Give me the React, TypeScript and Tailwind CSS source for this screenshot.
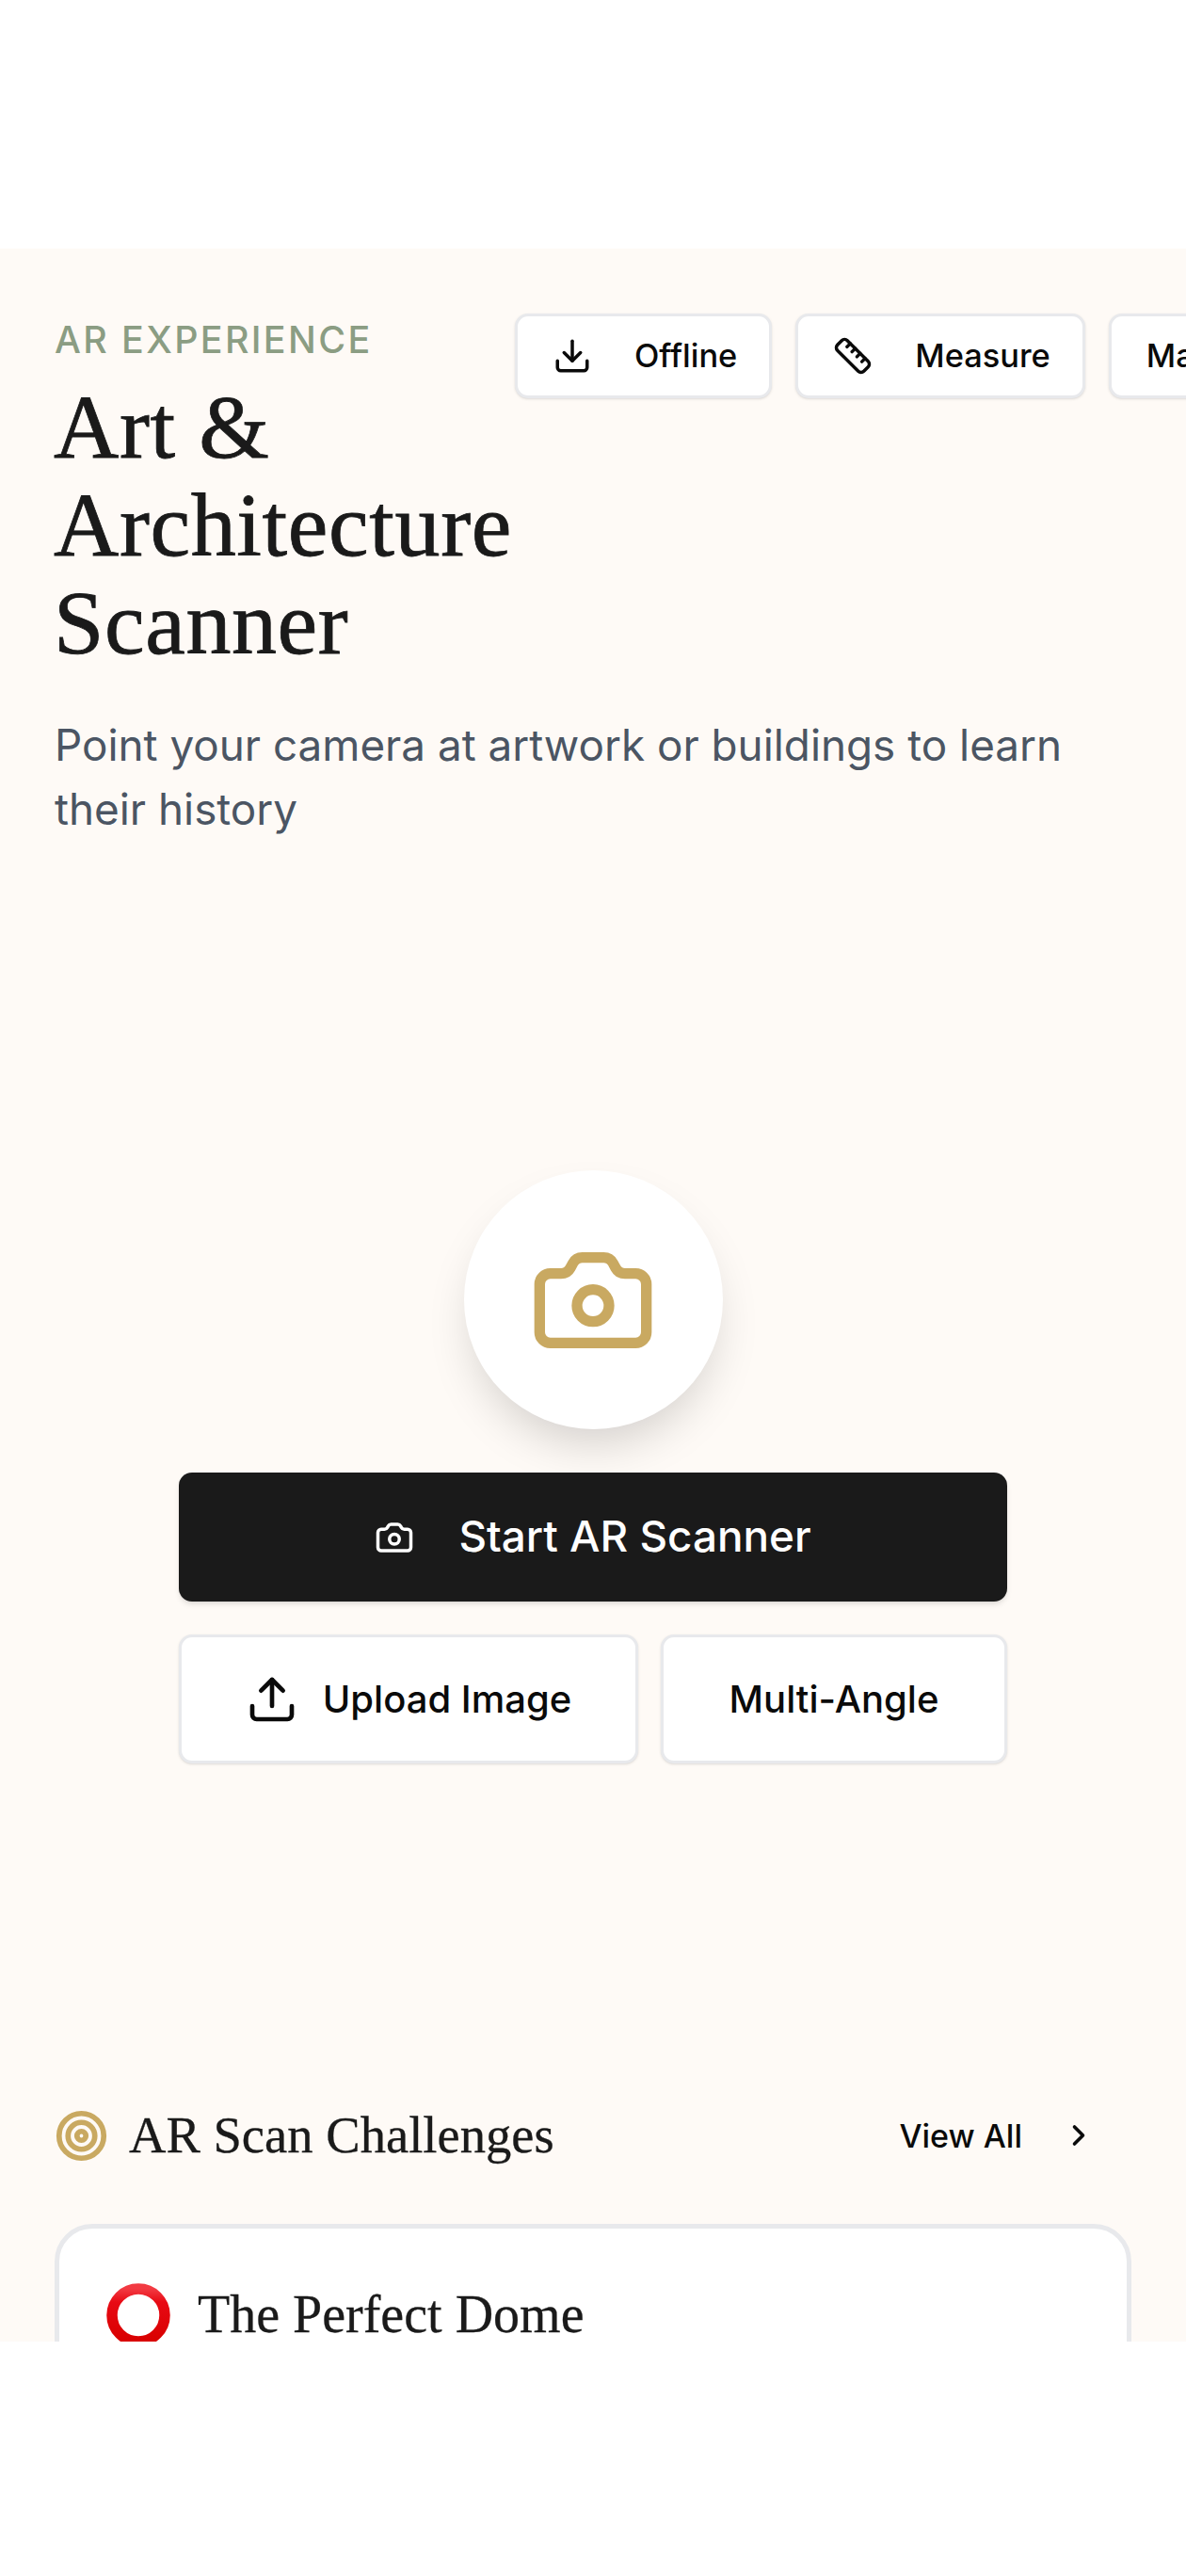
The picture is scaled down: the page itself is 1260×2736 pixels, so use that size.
import { Camera, ChevronRight, Download, Ruler, Target, Upload } from "lucide-react";

const sans = "font-['Inter','Liberation_Sans',sans-serif]";
const serif = "font-['Liberation_Serif','Times_New_Roman',serif]";

function Chip({ icon, label }: { icon: React.ReactNode; label: string }) {
  return (
    <div className="flex h-[90px] shrink-0 items-center gap-[45px] rounded-[14px] border-[3px] border-[#e8e9ec] bg-white pl-[37px] pr-[34px] shadow-sm">
      {icon}
      <span className="text-[34.4px] font-medium text-[#0a0a0a]">{label}</span>
    </div>
  );
}

export default function App() {
  return (
    <div className={`h-[2736px] w-[1260px] overflow-hidden bg-white ${sans}`}>
      <div className="h-[264px]" />
      <main className="flex h-[2223px] flex-col overflow-hidden bg-[#fefaf6] pt-[69px]">
        <div className="flex items-start">
          <div className="w-[547px] shrink-0 pl-[58px]">
            <div className="pt-[3px] text-[39.4px] font-medium leading-[50px] tracking-[0.06em] text-[#8b9d83]">AR EXPERIENCE</div>
          </div>
          <div className="flex gap-[25px]">
            <Chip label="Offline" icon={<Download size={42} strokeWidth={2} color="#0a0a0a" />} />
            <Chip label="Measure" icon={<Ruler size={42} strokeWidth={2} color="#0a0a0a" />} />
            <Chip label="Map" icon={null} />
          </div>
        </div>
        <h1 className={`-mt-[21px] w-[500px] pl-[57px] text-[96px] font-normal leading-[104px] tracking-[0.6px] text-[#1a1a1a] [-webkit-text-stroke:0.8px_#1a1a1a] ${serif}`}>
          Art &amp; Architecture Scanner
        </h1>
        <p className="mt-[44px] pl-[58px] pr-[100px] text-[45.8px] leading-[68px] text-[#4b5563]">
          Point your camera at artwork or buildings to learn their history
        </p>
        <div className="mt-[349px] flex flex-col items-center">
          <div className="flex h-[275px] w-[275px] items-center justify-center rounded-full bg-white shadow-[0_25px_50px_-12px_rgba(0,0,0,0.18)]">
            <Camera size={136} strokeWidth={2} color="#c9a961" />
          </div>
          <button className="mt-[46px] flex h-[137px] w-[880px] items-center justify-center gap-[47px] rounded-[14px] bg-[#1a1a1a] text-[45.8px] font-medium text-white shadow-md">
            <Camera size={42} strokeWidth={2} />
            Start AR Scanner
          </button>
          <div className="mt-[35px] flex w-[880px] gap-[24px]">
            <button className="flex h-[137px] w-[488px] items-center justify-center gap-[26px] rounded-[14px] border-[3px] border-[#e8e9ec] bg-white text-[40px] font-medium text-[#0a0a0a] shadow-sm">
              <Upload size={56} strokeWidth={2} />
              Upload Image
            </button>
            <button className="flex h-[137px] flex-1 items-center justify-center rounded-[14px] border-[3px] border-[#e8e9ec] bg-white text-[40px] font-medium text-[#0a0a0a] shadow-sm">
              Multi-Angle
            </button>
          </div>
        </div>
        <div className="mt-[359px] flex items-center justify-between pl-[58px] pr-[96px]">
          <div className="flex items-center gap-[22px]">
            <Target size={57} strokeWidth={2.4} color="#c9a961" />
            <h2 className={`text-[54.6px] font-normal leading-[72px] text-[#1a1a1a] [-webkit-text-stroke:0.3px_#1a1a1a] ${serif}`}>AR Scan Challenges</h2>
          </div>
          <div className="flex items-center gap-[42px] text-[34px] font-medium text-[#0a0a0a]">
            View All
            <ChevronRight size={36} strokeWidth={2.4} />
          </div>
        </div>
        <div className="mx-[58px] mt-[58px] h-[300px] shrink-0 rounded-[40px] border-[5px] border-[#e8e9ec] bg-white pl-[49px] pr-[50px] pt-[54px]">
          <div className="flex items-center gap-[28px]">
            <svg className="mt-[3px]" width="70" height="70" viewBox="0 0 70 70">
              <defs>
                <linearGradient id="ring" x1="0" y1="0" x2="0" y2="1">
                  <stop offset="0" stopColor="#f23a42" />
                  <stop offset="0.25" stopColor="#e80a14" />
                  <stop offset="1" stopColor="#d80000" />
                </linearGradient>
              </defs>
              <circle cx="35" cy="35" r="28" fill="none" stroke="url(#ring)" strokeWidth="11.5" />
            </svg>
            <h3 className={`text-[56px] font-normal leading-[72px] text-[#1a1a1a] [-webkit-text-stroke:0.3px_#1a1a1a] ${serif}`}>The Perfect Dome</h3>
          </div>
        </div>
      </main>
    </div>
  );
}
